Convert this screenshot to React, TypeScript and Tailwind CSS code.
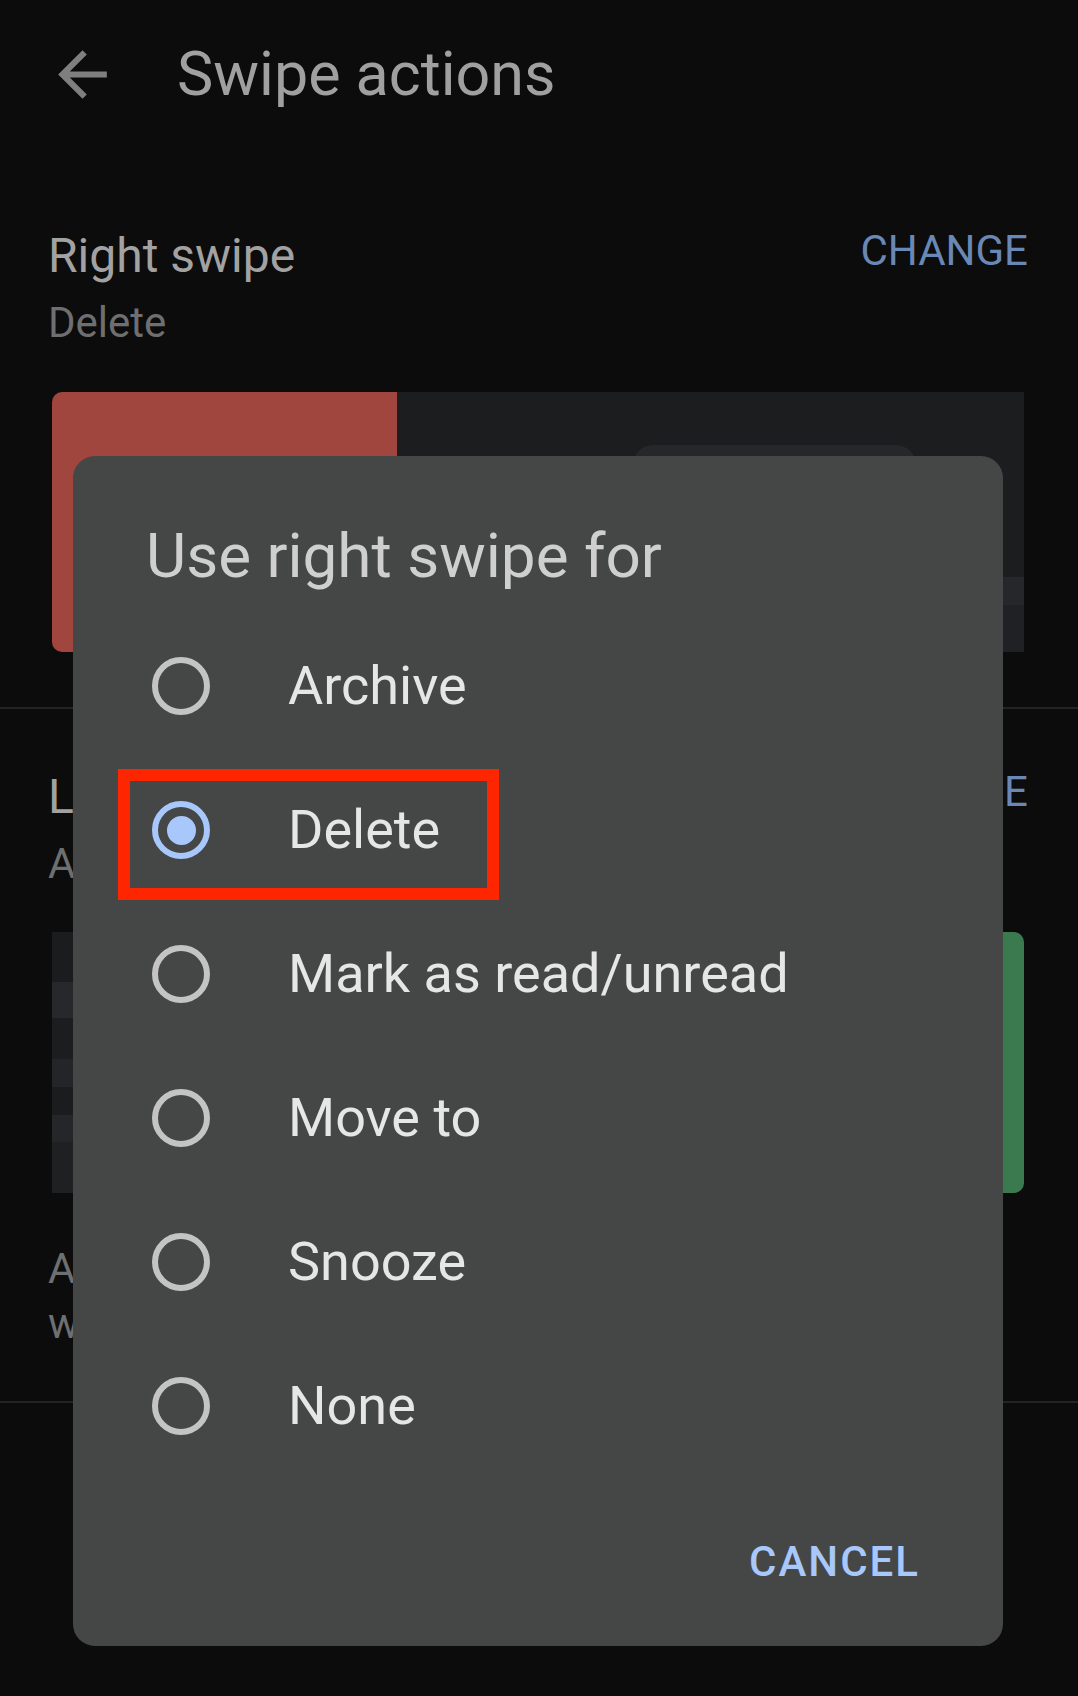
import React from 'react';

const options = ['Archive', 'Delete', 'Mark as read/unread', 'Move to', 'Snooze', 'None'];

function BackArrow() {
  return (
    <svg viewBox="0 0 24 24" className="w-[73px] h-[73px] shrink-0" fill="#7f7f7f">
      <path d="M20 11H7.83l5.59-5.59L12 4l-8 8 8 8 1.41-1.41L7.83 13H20v-2z" />
    </svg>
  );
}

function Radio({ checked }: { checked: boolean }) {
  if (checked) {
    return (
      <div className="w-[58px] h-[58px] rounded-full border-[6px] border-[#a8c7fa] flex items-center justify-center shrink-0">
        <div className="w-[29px] h-[29px] rounded-full bg-[#a8c7fa]" />
      </div>
    );
  }
  return <div className="w-[58px] h-[58px] rounded-full border-[6px] border-[#c4c4c4] shrink-0" />;
}

function SettingHeader({ title, value }: { title: string; value: string }) {
  return (
    <div className="flex items-start justify-between pl-[48px] pr-[50px]">
      <div>
        <div className="text-[48px] leading-[56px] text-[#a2a2a2]">{title}</div>
        <div className="mt-[14px] text-[42px] leading-[50px] text-[#6e6f71]">{value}</div>
      </div>
      <button className="text-[42px] leading-[46px] text-[#6a88b6]">CHANGE</button>
    </div>
  );
}

// preview of a right swipe: red action area, email row pushed right
function RightSwipePreview() {
  return (
    <div className="ml-[52px] w-[972px] h-[260px] flex overflow-hidden">
      <div className="w-[345px] h-full bg-[#a1463f] rounded-l-[10px]" />
      <div className="flex-1 flex flex-col bg-[#1c1d1f]">
        <div className="h-[185px] pt-[53px] pl-[236px]">
          <div className="w-[283px] h-[80px] rounded-t-[20px] bg-[#26272a]" />
        </div>
        <div className="h-[28px] bg-[#26272a]" />
        <div className="flex-1 bg-[#202124]" />
      </div>
    </div>
  );
}

// preview of a left swipe: email row pushed left, green action area
function LeftSwipePreview() {
  return (
    <div className="ml-[52px] w-[972px] h-[261px] flex overflow-hidden">
      <div className="flex-1 flex flex-col">
        <div className="h-[50px] bg-[#1b1c1e]" />
        <div className="h-[36px] bg-[#27282b]" />
        <div className="h-[41px] bg-[#1c1d1f]" />
        <div className="h-[28px] bg-[#242528]" />
        <div className="h-[28px] bg-[#1b1c1e]" />
        <div className="h-[27px] bg-[#252629]" />
        <div className="flex-1 bg-[#1f2022]" />
      </div>
      <div className="w-[345px] h-full bg-[#3b7a4e] rounded-r-[10px]" />
    </div>
  );
}

export default function App() {
  return (
    <div className="relative w-[1078px] h-[1696px] overflow-hidden bg-[#0c0c0c] font-['Roboto','Liberation_Sans',sans-serif]">
      {/* toolbar */}
      <div className="h-[148px] flex items-center pl-[46px]">
        <BackArrow />
        <h1 className="ml-[58px] text-[61px] leading-[72px] text-[#a0a0a0]">Swipe actions</h1>
      </div>

      <div className="pt-[80px]">
        <SettingHeader title="Right swipe" value="Delete" />
        <div className="mt-[44px]">
          <RightSwipePreview />
        </div>
      </div>

      <div className="mt-[55px] h-[2px] bg-[#232323]" />

      <div className="pt-[60px]">
        <SettingHeader title="Left swipe" value="Archive" />
        <div className="mt-[43px]">
          <LeftSwipePreview />
        </div>
        <p className="mt-[48px] pl-[48px] pr-[80px] text-[42px] leading-[55px] text-[#6e6f71]">
          Archive also applies to notifications
          <br />
          when you swipe them away
        </p>
      </div>

      <div className="mt-[50px] h-[2px] bg-[#232323]" />

      {/* choice dialog */}
      <div className="absolute left-[73px] top-[456px] w-[930px] h-[1190px] rounded-[22px] bg-[#454646] flex flex-col pt-[65px] pb-[59px]">
        <h2 className="pl-[73px] text-[62px] leading-[70px] text-[#cfcfcf]">Use right swipe for</h2>
        <div className="mt-[23px] flex flex-col">
          {options.map((opt) => (
            <div key={opt} className="h-[144px] flex items-center pl-[79px]">
              <Radio checked={opt === 'Delete'} />
              <span className="ml-[78px] text-[54px] leading-[62px] text-[#e6e6e6]">{opt}</span>
            </div>
          ))}
        </div>
        <div className="mt-[59px] flex justify-end pr-[83px]">
          <button className="text-[42px] leading-[50px] font-medium tracking-[2px] text-[#a8c7fa]">CANCEL</button>
        </div>

        {/* highlight around the chosen option */}
        <div className="absolute left-[45px] top-[313px] w-[381px] h-[131px] border-[12px] border-[#fe2600]" />
      </div>
    </div>
  );
}
